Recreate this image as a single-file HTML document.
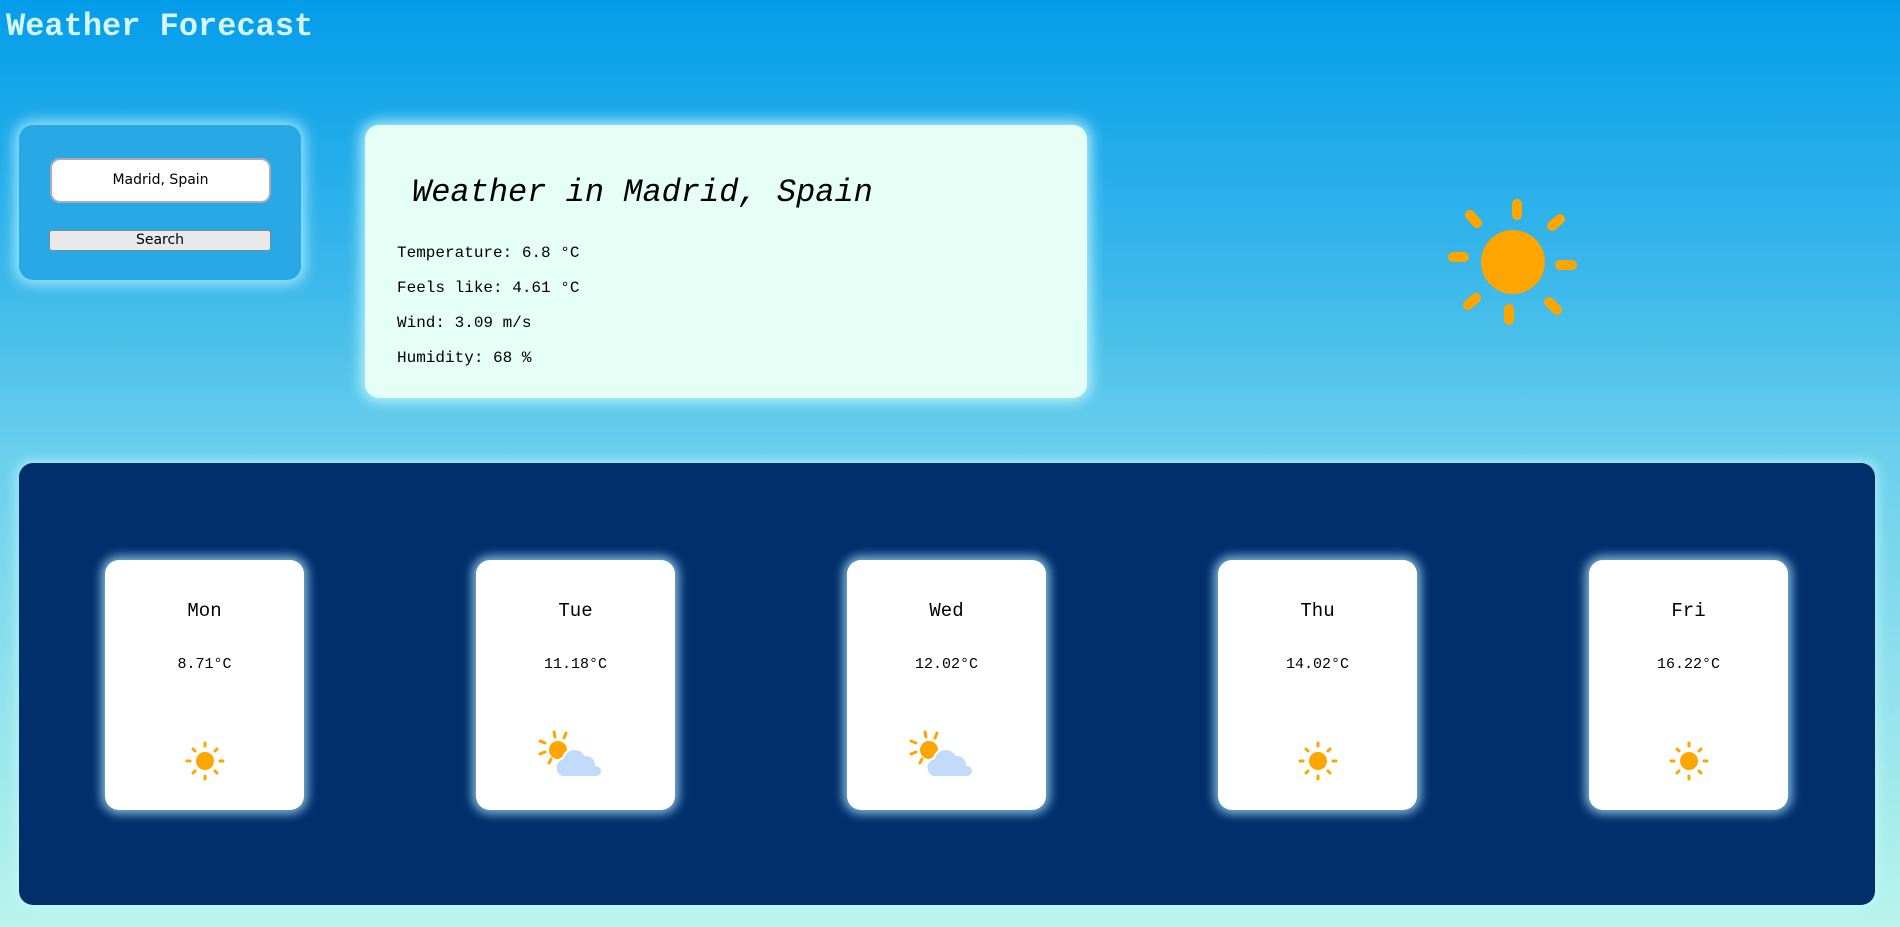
<!DOCTYPE html>
<html><head><meta charset="utf-8"><style>
*{margin:0;padding:0;box-sizing:border-box}
html,body{width:1900px;height:927px;overflow:hidden}
body{background:linear-gradient(180deg,#049dea 0%,#3bb8ea 30%,#6cd0ec 50%,#b9f4ec 100%);font-family:"Liberation Mono","Courier New",monospace;position:relative}
h1{position:absolute;left:6px;top:8px;font-size:32px;font-weight:bold;color:#d4f6ff}
.search{position:absolute;left:19px;top:125px;width:282px;height:155px;background:#28a9e6;border-radius:14px;box-shadow:0 0 14px 4px rgba(190,245,255,.8)}
.inp{position:absolute;left:31px;top:33px;width:221px;height:45px;background:#fff;border:2px solid #aab;border-radius:10px;font-family:"DejaVu Sans",sans-serif;font-size:14px;text-align:center;line-height:41px;color:#000}
.btn{position:absolute;left:30px;top:105px;width:222px;height:21px;background:#e9e9ed;border:1px solid #888;border-radius:3px;font-family:"DejaVu Sans",sans-serif;font-size:14px;text-align:center;line-height:19px;color:#000}
.info{position:absolute;left:365px;top:125px;width:722px;height:273px;background:#e6fff6;border-radius:14px;box-shadow:0 0 14px 4px rgba(200,250,255,.85)}
.info h2{position:absolute;left:47px;top:49px;font-size:32px;font-style:italic;font-weight:normal;color:#000}
.info p{position:absolute;left:32px;font-size:16px;color:#000}
.fc{position:absolute;left:19px;top:463px;width:1856px;height:442px;background:#002f6c;border-radius:14px;box-shadow:0 0 12px 3px rgba(200,255,255,.6)}
.card{position:absolute;top:97px;width:199px;height:250px;background:#fff;border-radius:14px;box-shadow:0 0 10px 4px rgba(170,230,255,.75);text-align:center;color:#000}
.card .d{position:absolute;top:40px;width:100%;font-size:19px}
.card .t{position:absolute;top:96px;width:100%;font-size:15px}
.card svg{position:absolute;left:50%;top:179px;transform:translateX(-50%)}
</style></head><body>
<h1>Weather Forecast</h1>
<div class="search"><div class="inp">Madrid, Spain</div><div class="btn">Search</div></div>
<div class="info"><h2>Weather in Madrid, Spain</h2>
<p style="top:119px">Temperature: 6.8 °C</p>
<p style="top:154px">Feels like: 4.61 °C</p>
<p style="top:189px">Wind: 3.09 m/s</p>
<p style="top:224px">Humidity: 68 %</p></div>
<svg style="position:absolute;left:1443px;top:192px" width="140" height="140" viewBox="-70 -70 140 140">
<circle r="32" fill="#ffa500"/>
<g stroke="#ffa500" stroke-width="10" stroke-linecap="round">
<line x1="4" y1="-58" x2="4" y2="-47"/><line x1="39" y1="-36" x2="47" y2="-43"/>
<line x1="47" y1="3" x2="59" y2="3"/><line x1="36" y1="40" x2="44" y2="48"/>
<line x1="-4" y1="47" x2="-4" y2="58"/><line x1="-37" y1="36" x2="-45" y2="43"/>
<line x1="-60" y1="-5" x2="-49" y2="-5"/><line x1="-43" y1="-47" x2="-36" y2="-39"/>
</g></svg>
<div class="fc">
<div class="card" style="left:86px"><div class="d">Mon</div><div class="t">8.71°C</div>
<svg width="44" height="44" viewBox="-22 -22 44 44"><circle r="9" fill="#ffa500"/><g stroke="#ffa500" stroke-width="3" stroke-linecap="round"><line x1="0" y1="-18" x2="0" y2="-15"/><line x1="0" y1="15" x2="0" y2="18"/><line x1="-18" y1="0" x2="-15" y2="0"/><line x1="15" y1="0" x2="18" y2="0"/><line x1="-12" y1="-12" x2="-10" y2="-10"/><line x1="12" y1="12" x2="10" y2="10"/><line x1="12" y1="-12" x2="10" y2="-10"/><line x1="-12" y1="12" x2="-10" y2="10"/></g></svg></div>
<div class="card" style="left:457px"><div class="d">Tue</div><div class="t">11.18°C</div>
<svg width="70" height="56" viewBox="0 0 70 56" style="left:60px;transform:none;top:170px"><g stroke="#ffa500" stroke-width="3" stroke-linecap="round"><line x1="18" y1="2" x2="19" y2="7"/><line x1="30" y1="3" x2="28" y2="8"/><line x1="4" y1="11" x2="9" y2="13"/><line x1="4" y1="24" x2="9" y2="22"/><line x1="13" y1="33" x2="15" y2="29"/></g><circle cx="22" cy="20" r="9" fill="#ffa500"/><path d="M26 47 a10 10 0 0 1 1-19 a12 12 0 0 1 22-3 a10 10 0 0 1 11 10 a6 6 0 0 1 0 12z" fill="#c2dbfb" stroke="#fff" stroke-width="2"/></svg></div>
<div class="card" style="left:828px"><div class="d">Wed</div><div class="t">12.02°C</div>
<svg width="70" height="56" viewBox="0 0 70 56" style="left:60px;transform:none;top:170px"><g stroke="#ffa500" stroke-width="3" stroke-linecap="round"><line x1="18" y1="2" x2="19" y2="7"/><line x1="30" y1="3" x2="28" y2="8"/><line x1="4" y1="11" x2="9" y2="13"/><line x1="4" y1="24" x2="9" y2="22"/><line x1="13" y1="33" x2="15" y2="29"/></g><circle cx="22" cy="20" r="9" fill="#ffa500"/><path d="M26 47 a10 10 0 0 1 1-19 a12 12 0 0 1 22-3 a10 10 0 0 1 11 10 a6 6 0 0 1 0 12z" fill="#c2dbfb" stroke="#fff" stroke-width="2"/></svg></div>
<div class="card" style="left:1199px"><div class="d">Thu</div><div class="t">14.02°C</div>
<svg width="44" height="44" viewBox="-22 -22 44 44"><circle r="9" fill="#ffa500"/><g stroke="#ffa500" stroke-width="3" stroke-linecap="round"><line x1="0" y1="-18" x2="0" y2="-15"/><line x1="0" y1="15" x2="0" y2="18"/><line x1="-18" y1="0" x2="-15" y2="0"/><line x1="15" y1="0" x2="18" y2="0"/><line x1="-12" y1="-12" x2="-10" y2="-10"/><line x1="12" y1="12" x2="10" y2="10"/><line x1="12" y1="-12" x2="10" y2="-10"/><line x1="-12" y1="12" x2="-10" y2="10"/></g></svg></div>
<div class="card" style="left:1570px"><div class="d">Fri</div><div class="t">16.22°C</div>
<svg width="44" height="44" viewBox="-22 -22 44 44"><circle r="9" fill="#ffa500"/><g stroke="#ffa500" stroke-width="3" stroke-linecap="round"><line x1="0" y1="-18" x2="0" y2="-15"/><line x1="0" y1="15" x2="0" y2="18"/><line x1="-18" y1="0" x2="-15" y2="0"/><line x1="15" y1="0" x2="18" y2="0"/><line x1="-12" y1="-12" x2="-10" y2="-10"/><line x1="12" y1="12" x2="10" y2="10"/><line x1="12" y1="-12" x2="10" y2="-10"/><line x1="-12" y1="12" x2="-10" y2="10"/></g></svg></div>
</div>
</body></html>
